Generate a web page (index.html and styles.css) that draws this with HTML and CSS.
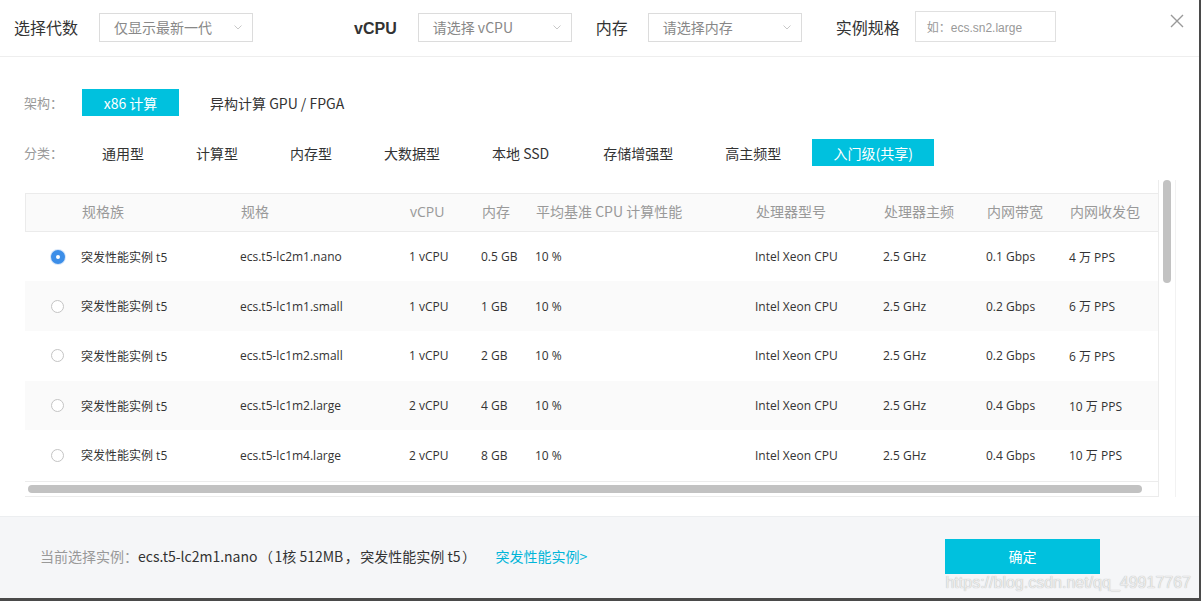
FILE: index.html
```html
<!DOCTYPE html>
<html lang="zh">
<head>
<meta charset="utf-8">
<title>选择实例规格</title>
<link rel="stylesheet" href="styles.css">
</head>
<body>
<div class="dialog">
  <div class="topbar">
    <span class="tb-label l-gen">选择代数</span>
    <div class="select s-gen"><span>仅显示最新一代</span><svg class="chev" width="8" height="5" viewBox="0 0 8 5"><path d="M0.5 0.5 L4 4 L7.5 0.5" fill="none" stroke="#c8c8c8" stroke-width="1"/></svg></div>
    <span class="tb-label tb-vcpu">vCPU</span>
    <div class="select s-vcpu"><span>请选择 vCPU</span><svg class="chev" width="8" height="5" viewBox="0 0 8 5"><path d="M0.5 0.5 L4 4 L7.5 0.5" fill="none" stroke="#c8c8c8" stroke-width="1"/></svg></div>
    <span class="tb-label l-mem">内存</span>
    <div class="select s-mem"><span>请选择内存</span><svg class="chev" width="8" height="5" viewBox="0 0 8 5"><path d="M0.5 0.5 L4 4 L7.5 0.5" fill="none" stroke="#c8c8c8" stroke-width="1"/></svg></div>
    <span class="tb-label l-spec">实例规格</span>
    <div class="input"><span>如：ecs.sn2.large</span></div>
    <svg class="close" width="14" height="14" viewBox="0 0 14 14"><path d="M1 1 L13 13 M13 1 L1 13" stroke="#999" stroke-width="1.4" fill="none"/></svg>
  </div>

  <div class="filters">
    <div class="frow arch">
      <span class="flabel">架构：</span>
      <span class="btn-active b-x86">x86 计算</span>
      <span class="fitem f-hetero">异构计算 GPU / FPGA</span>
    </div>
    <div class="frow cat">
      <span class="flabel l-cat">分类：</span>
      <span class="fitem">通用型</span>
      <span class="fitem">计算型</span>
      <span class="fitem">内存型</span>
      <span class="fitem">大数据型</span>
      <span class="fitem f-ssd">本地 SSD</span>
      <span class="fitem">存储增强型</span>
      <span class="fitem">高主频型</span>
      <span class="btn-active b-entry">入门级(共享)</span>
    </div>
  </div>

  <div class="table-area">
    <div class="table-scroll">
      <div class="trow thead">
        <span></span><span>规格族</span><span>规格</span><span>vCPU</span><span>内存</span><span>平均基准 CPU 计算性能</span><span>处理器型号</span><span>处理器主频</span><span>内网带宽</span><span>内网收发包</span>
      </div>
      <div class="trow">
        <span><i class="radio checked"></i></span><span>突发性能实例 t5</span><span>ecs.t5-lc2m1.nano</span><span>1 vCPU</span><span>0.5 GB</span><span>10 %</span><span>Intel Xeon CPU</span><span>2.5 GHz</span><span>0.1 Gbps</span><span>4 万 PPS</span>
      </div>
      <div class="trow alt">
        <span><i class="radio"></i></span><span>突发性能实例 t5</span><span>ecs.t5-lc1m1.small</span><span>1 vCPU</span><span>1 GB</span><span>10 %</span><span>Intel Xeon CPU</span><span>2.5 GHz</span><span>0.2 Gbps</span><span>6 万 PPS</span>
      </div>
      <div class="trow">
        <span><i class="radio"></i></span><span>突发性能实例 t5</span><span>ecs.t5-lc1m2.small</span><span>1 vCPU</span><span>2 GB</span><span>10 %</span><span>Intel Xeon CPU</span><span>2.5 GHz</span><span>0.2 Gbps</span><span>6 万 PPS</span>
      </div>
      <div class="trow alt">
        <span><i class="radio"></i></span><span>突发性能实例 t5</span><span>ecs.t5-lc1m2.large</span><span>2 vCPU</span><span>4 GB</span><span>10 %</span><span>Intel Xeon CPU</span><span>2.5 GHz</span><span>0.4 Gbps</span><span>10 万 PPS</span>
      </div>
      <div class="trow">
        <span><i class="radio"></i></span><span>突发性能实例 t5</span><span>ecs.t5-lc1m4.large</span><span>2 vCPU</span><span>8 GB</span><span>10 %</span><span>Intel Xeon CPU</span><span>2.5 GHz</span><span>0.4 Gbps</span><span>10 万 PPS</span>
      </div>
      <div class="hscroll"><div class="hthumb"></div></div>
    </div>
    <div class="vscroll"><div class="vthumb"></div></div>
  </div>

  <div class="footer">
    <div class="summary">
      <span class="sum-label">当前选择实例：</span><span class="sum-val">ecs.t5-lc2m1.nano<span class="p">（</span>1核 512MB<span class="p">，</span>突发性能实例 t5<span class="p">）</span></span><span class="sum-link">突发性能实例&gt;</span>
    </div>
    <span class="ok-btn">确定</span>
    <span class="watermark">https://blog.csdn.net/qq_49917767</span>
  </div>
</div>
</body>
</html>
```

FILE: styles.css
```css
html, body {
  margin: 0;
  padding: 0;
}
body {
  width: 1201px;
  height: 601px;
  overflow: hidden;
  background: #4a4a4a;
  font-family: "Noto Sans", "Noto Sans CJK SC", sans-serif;
  color: #333;
}
.dialog {
  width: 1199px;
  height: 598px;
  background: #fff;
  display: flex;
  flex-direction: column;
  position: relative;
}

/* top bar */
.topbar {
  height: 54px;
  padding-bottom: 2px;
  border-bottom: 1px solid #eeeeee;
  display: flex;
  align-items: center;
  padding-left: 14px;
  box-sizing: content-box;
  flex: none;
}
.tb-label {
  font-family: "Noto Sans CJK SC", sans-serif;
  font-size: 16px;
  color: #333;
  line-height: 20px;
}
.tb-vcpu {
  font-family: "Liberation Sans", Arial, sans-serif;
  font-weight: bold;
  margin-left: 101px;
  margin-right: 21px;
  margin-top: 3px;
}
.l-gen { margin-right: 21px; }
.l-mem { margin-left: 24px; margin-right: 20px; }
.l-spec { margin-left: 34px; margin-right: 15px; }
.select {
  width: 154px;
  height: 29px;
  box-sizing: border-box;
  border: 1px solid #dcdcdc;
  display: flex;
  align-items: center;
  justify-content: space-between;
  padding: 0 10px 0 14px;
  font-family: "Noto Sans CJK SC", sans-serif;
  font-size: 14px;
  color: #888;
}
.chev { flex: none; }
.input {
  width: 141px;
  height: 31px;
  box-sizing: border-box;
  border: 1px solid #e0e0e0;
  display: flex;
  align-items: center;
  padding-left: 11px;
  font-family: "Liberation Sans", "Noto Sans CJK SC", sans-serif;
  font-size: 12px;
  color: #999;
  margin-top: -2px;
}
.close {
  margin-left: 114px;
  margin-top: -12px;
}

/* filters */
.filters {
  padding: 32px 0 0 24px;
  flex: none;
}
.frow {
  display: flex;
  align-items: center;
  height: 27px;
}
.cat { margin-top: 23px; }
.flabel {
  font-family: "Noto Sans CJK SC", sans-serif;
  font-size: 13px;
  color: #999;
  width: 58px;
}
.l-cat { width: 52px; }
.btn-active {
  background: #00c1de;
  color: #fff;
  height: 27px;
  display: inline-flex;
  align-items: center;
  justify-content: center;
  font-family: "Noto Sans CJK SC", sans-serif;
  font-size: 14px;
}
.b-x86 { width: 97px; }
.b-entry { width: 122px; margin-left: 5px; }
.fitem {
  font-family: "Noto Sans CJK SC", sans-serif;
  font-size: 14px;
  color: #333;
  padding: 0 26px;
}
.f-ssd { padding-right: 28px; }
.f-hetero { padding-left: 31px; }

/* table */
.table-area {
  margin-top: 14px;
  margin-left: 25px;
  width: 1151px;
  height: 317px;
  display: flex;
  flex: none;
}
.table-scroll {
  width: 1135px;
  padding-top: 13px;
  box-sizing: border-box;
  border-right: 1px solid #ececec;
  display: flex;
  flex-direction: column;
}
.trow {
  display: grid;
  grid-template-columns: 56px 159px 169px 72px 54px 220px 128px 103px 83px 1fr;
  height: 50px;
  align-items: center;
  font-family: "Open Sans", "Noto Sans CJK SC", sans-serif;
  font-size: 12px;
  color: #333;
}
.trow.alt { background: #fafafa; }
.thead {
  height: 39px;
  box-sizing: border-box;
  background: #fafafa;
  border-top: 1px solid #ebebeb;
  border-bottom: 1px solid #ebebeb;
  border-left: 1px solid #ebebeb;
  font-size: 14px;
  color: #999;
  font-family: "Noto Sans CJK SC", sans-serif;
}
.thead span { margin-top: -2px; }
.thead span:nth-child(4) { font-family: "Open Sans", sans-serif; }
.radio {
  display: block;
  width: 13px;
  height: 13px;
  box-sizing: border-box;
  border: 1px solid #c4c4c4;
  border-radius: 50%;
  background: #fff;
  margin-left: 26px;
}
.radio.checked {
  width: 14px;
  height: 14px;
  border: 5px solid #3c8ee8;
  background: #fff;
  box-shadow: 0 0 0 1px #d6e6fa;
  margin-left: 26px;
}
.hscroll {
  height: 14px;
  margin-top: 1px;
  border-top: 1px solid #ececec;
  border-bottom: 1px solid #ececec;
  display: flex;
  align-items: center;
  padding-left: 3px;
}
.hthumb {
  width: 1114px;
  height: 8px;
  border-radius: 4px;
  background: #c2c2c2;
}
.vscroll {
  width: 16px;
  display: flex;
  justify-content: center;
  border-right: 1px solid #f2f2f2;
}
.vthumb {
  width: 8px;
  height: 103px;
  border-radius: 4px;
  background: #c2c2c2;
}

/* footer */
.footer {
  margin-top: 19px;
  border-top: 1px solid #eceef0;
  background: #f5f6f8;
  flex: 1;
  display: flex;
  align-items: center;
  padding-left: 40px;
  position: relative;
}
.summary {
  font-family: "Noto Sans CJK SC", sans-serif;
  font-size: 14px;
  width: 905px;
  margin-top: -3px;
}
.sum-label { color: #999; }
.sum-val { color: #333; }
.sum-val .p { display: inline-block; width: 17px; text-align: center; }
.sum-link { color: #00b5d8; margin-left: 18px; }
.ok-btn {
  width: 155px;
  height: 35px;
  background: #00c1de;
  color: #fff;
  display: inline-flex;
  align-items: center;
  justify-content: center;
  font-family: "Noto Sans CJK SC", sans-serif;
  font-size: 14px;
  margin-top: -3px;
}
.watermark {
  position: absolute;
  right: 8px;
  bottom: 6px;
  font-family: "Liberation Sans", Arial, sans-serif;
  font-size: 16px;
  color: #ececec;
  text-shadow: 0 0 1px #a8a8a8;
}
```
